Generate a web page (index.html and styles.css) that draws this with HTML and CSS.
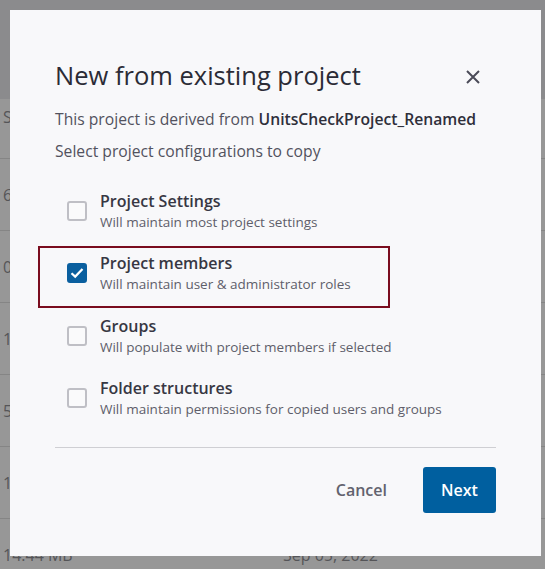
FILE: index.html
```html
<!DOCTYPE html>
<html>
<head>
<meta charset="utf-8">
<link rel="stylesheet" href="styles.css">
</head>
<body>
<div class="page">
  <div class="topbar"></div>
  <div class="thead"><span class="cell">Size</span></div>
  <div class="trow"><span class="cell">6.12 MB</span></div>
  <div class="trow"><span class="cell">0.98 MB</span></div>
  <div class="trow"><span class="cell">1.27 MB</span></div>
  <div class="trow"><span class="cell">5.40 MB</span></div>
  <div class="trow"><span class="cell">1.03 MB</span></div>
  <div class="trow"><span class="cell">14.44 MB</span><span class="cell date">Sep 05, 2022</span></div>
</div>

<div class="modal">
  <div class="modal-header">
    <h1 class="title">New from existing project</h1>
    <button class="close" aria-label="Close">
      <svg width="14" height="14" viewBox="0 0 14 14"><path d="M1 1 L13 13 M13 1 L1 13" stroke="#4b4b58" stroke-width="2" fill="none"/></svg>
    </button>
  </div>
  <p class="desc">This project is derived from <strong>UnitsCheckProject_Renamed</strong></p>
  <p class="desc second">Select project configurations to copy</p>

  <div class="options">
    <label class="option">
      <span class="box"></span>
      <span class="text"><span class="label">Project Settings</span><span class="sub">Will maintain most project settings</span></span>
    </label>
    <label class="option focused">
      <span class="box checked"><svg width="14" height="12" viewBox="0 0 14 12"><path d="M1.5 6.2 L5.2 9.6 L12.5 2" stroke="#fff" stroke-width="2.2" fill="none"/></svg></span>
      <span class="text"><span class="label">Project members</span><span class="sub">Will maintain user &amp; administrator roles</span></span>
    </label>
    <label class="option">
      <span class="box"></span>
      <span class="text"><span class="label">Groups</span><span class="sub">Will populate with project members if selected</span></span>
    </label>
    <label class="option">
      <span class="box"></span>
      <span class="text"><span class="label">Folder structures</span><span class="sub">Will maintain permissions for copied users and groups</span></span>
    </label>
  </div>

  <div class="divider"></div>

  <div class="footer">
    <button class="btn cancel">Cancel</button>
    <button class="btn next">Next</button>
  </div>
</div>
</body>
</html>
```

FILE: styles.css
```css
* { box-sizing: border-box; }
html, body { margin: 0; padding: 0; }
body {
  width: 545px;
  height: 569px;
  overflow: hidden;
  background: #979797;
  font-family: "Open Sans", "Noto Sans", sans-serif;
  position: relative;
}
.page { display: flex; flex-direction: column; }
.topbar { height: 99px; background: #8b8b8d; }
.thead { height: 59px; display: flex; align-items: center; padding-bottom: 23px; }
.trow {
  height: 72px;
  border-top: 1px solid #858585;
  display: flex;
  align-items: center;
  position: relative;
}
.cell { padding-left: 3px; font-size: 16px; color: #555558; }
.date { position: absolute; left: 280px; }

.modal {
  position: absolute;
  left: 10px;
  top: 10px;
  width: 531px;
  height: 546px;
  background: #f8f8fa;
  padding: 49px 45px 0 45px;
  display: flex;
  flex-direction: column;
}
.modal-header {
  display: flex;
  align-items: center;
  justify-content: space-between;
}
.title {
  margin: 0;
  font-size: 25.5px;
  line-height: 32px;
  font-weight: 400;
  color: #2b2b36;
}
.close {
  border: 0;
  background: none;
  padding: 0;
  width: 14px;
  height: 14px;
  margin-right: 16px;
  margin-top: 3px;
  display: flex;
}
.desc {
  margin: 17px 0 0 0;
  font-size: 15.7px;
  line-height: 22px;
  color: #52525e;
}
.desc strong { font-weight: 600; color: #2f2f3a; }
.desc.second { margin-top: 10px; }

.options { display: flex; flex-direction: column; margin-top: 18px; }
.option {
  height: 62.3px;
  display: flex;
  align-items: center;
  gap: 13px;
  padding-left: 12px;
  position: relative;
}
.option.focused::after {
  content: "";
  position: absolute;
  left: -17px;
  top: 4px;
  width: 348px;
  height: 58px;
  border: 2px solid #7a0c1e;
}
.box {
  width: 20px;
  height: 20px;
  border: 2px solid #bfbfc5;
  border-radius: 3px;
  background: #fafafb;
  flex: none;
  display: flex;
  align-items: center;
  justify-content: center;
}
.box.checked { background: #0a5f9f; border-color: #0a5f9f; }
.text { display: flex; flex-direction: column; }
.label { font-size: 16px; line-height: 22px; font-weight: 600; color: #373743; }
.sub { font-size: 13.5px; line-height: 20px; color: #5e5e6a; }

.divider { height: 1px; background: #cfcfd3; margin-top: 18px; }
.footer {
  display: flex;
  justify-content: flex-end;
  align-items: center;
  margin-top: 19px;
}
.btn {
  font-family: "Open Sans", "Noto Sans", sans-serif;
  font-size: 16px;
  font-weight: 600;
  border: 0;
  height: 46px;
  cursor: pointer;
}
.cancel { background: none; color: #62626e; padding: 0 16px; margin-right: 20px; }
.next { background: #005f9f; color: #fff; border-radius: 3px; width: 73px; padding: 0; }
```
